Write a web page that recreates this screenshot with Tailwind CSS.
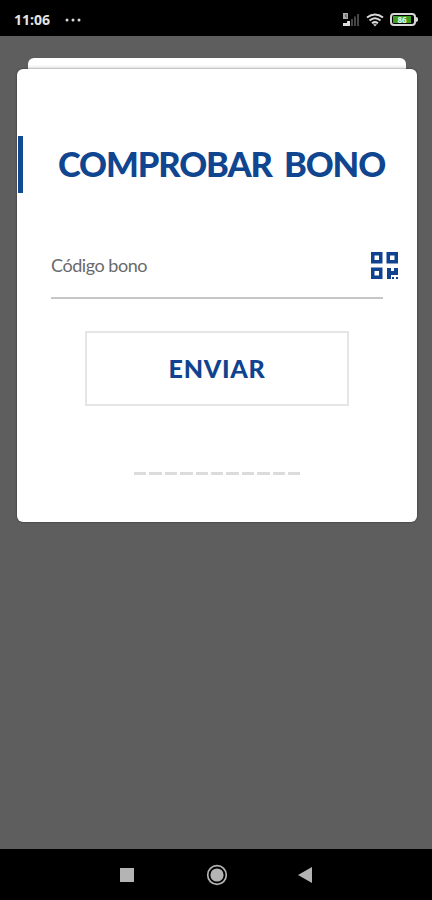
<!DOCTYPE html>
<html lang="es">
<head>
  <meta charset="UTF-8" />
  <meta name="viewport" content="width=device-width, initial-scale=1.0" />
  <title>Comprobar bono</title>
  <script src="https://cdn.jsdelivr.net/npm/@tailwindcss/browser@4"></script>
</head>
<body class="w-[432px] h-[900px] overflow-hidden flex flex-col bg-[#5e5e5e] font-['Lato',sans-serif]">

  <!-- Barra de estado -->
  <header class="h-9 shrink-0 bg-black flex items-center justify-between pl-[14px] pr-[14px] pt-[3px]">
    <div class="flex items-center gap-[15px]">
      <span class="font-['Open_Sans',sans-serif] font-bold text-[14px] leading-none text-[#e4e4e4]">11:06</span>
      <svg class="w-4 h-1" viewBox="0 0 16 4" fill="#d8d8d8">
        <circle cx="2" cy="2" r="1.5" /><circle cx="8" cy="2" r="1.5" /><circle cx="14" cy="2" r="1.5" />
      </svg>
    </div>
    <div class="flex items-center gap-[6px]">
      <svg class="w-[18px] h-[14px]" viewBox="0 0 18 14">
        <path d="M1 0h5v6H1z" fill="#aaa" />
        <path d="M3 2l2 3M4 1v3" stroke="#555" stroke-width=".8" />
        <path d="M1 10h4v3H1zM5 8h3v5H5z" fill="#ddd" />
        <path d="M9 6h2v7H9zM12 3.500h2V13h-2zM15 1h2v12h-2z" fill="#454545" />
      </svg>
      <svg class="w-[18px] h-[14px]" viewBox="0 0 18 14" fill="none" stroke="#dadada" stroke-width="2">
        <path d="M1 4.500Q9-1.500 17 4.500M3.500 7.500Q9 3 14.500 7.500M6 10.300Q9 8 12 10.300" />
        <path d="M7 11.300h4L9 13.500z" fill="#dadada" stroke="none" />
      </svg>
      <div class="flex items-center">
        <div class="w-[26px] h-[13px] rounded-[4px] border-2 border-[#d8d8d8] p-px flex">
          <span class="w-[18px] bg-[#3f9d20] font-['Open_Sans',sans-serif] font-bold text-[8px] leading-[7px] text-[#effbe8] text-center">86</span>
        </div>
        <div class="w-[2px] h-[5px] rounded-r bg-[#d8d8d8]"></div>
      </div>
    </div>
  </header>

  <main class="grow flex flex-col items-center pt-[22px]">
    <!-- Borde de la tarjeta trasera -->
    <div class="w-[378px] h-[11px] ml-[2px] rounded-t-[6px] bg-gradient-to-b from-white from-60% to-[#e8e8e8]"></div>

    <section class="w-[400px] h-[453px] ml-[2px] rounded-[6px] bg-white shadow-[0_0_2px_rgba(0,0,0,0.6)]">
      <div class="pt-[67px] flex items-center">
        <div class="w-[5px] h-[57px] ml-px bg-[#124b94]"></div>
        <h1 class="ml-[35px] font-black text-[34.500px] leading-[55px] pb-[2px] tracking-[-1.100px] [word-spacing:5px] whitespace-nowrap text-[#10458f]">COMPROBAR BONO</h1>
      </div>

      <div class="relative mt-[47px] ml-[34px] w-[332px] h-[59px] border-b-2 border-[#c6c6c6]">
        <label class="block pt-[13px] text-[18px] leading-[24px] tracking-[-0.45px] text-[#6a6a6a]">Código bono</label>
        <svg class="absolute left-[320px] top-[12px] w-[27px] h-[27px]" viewBox="0 0 27 27" fill="none" stroke="#10438f" stroke-width="3.500">
          <path d="M1.750 1.750h8v8h-8zM17.250 1.750h8v8h-8zM1.750 17.250h8v8h-8z" />
          <path d="M16 16h4v3h3v-3h4v7h-7v4h-4zM21 25h2v2h-2zM25 25h2v2h-2z" fill="#10438f" stroke="none" />
        </svg>
      </div>

      <button class="block mt-[32px] ml-[68px] w-[264px] h-[75px] border-2 border-[#e5e5e5] font-black text-[25px] leading-[71px] tracking-[0.7px] text-[#10438f]">ENVIAR</button>

      <div class="mt-[66px] ml-[117px] flex gap-[3px]">
        <i class="w-[12.400px] h-[3px] bg-[#dcdcdc]"></i><i class="w-[12.400px] h-[3px] bg-[#dcdcdc]"></i>
        <i class="w-[12.400px] h-[3px] bg-[#dcdcdc]"></i><i class="w-[12.400px] h-[3px] bg-[#dcdcdc]"></i>
        <i class="w-[12.400px] h-[3px] bg-[#dcdcdc]"></i><i class="w-[12.400px] h-[3px] bg-[#dcdcdc]"></i>
        <i class="w-[12.400px] h-[3px] bg-[#dcdcdc]"></i><i class="w-[12.400px] h-[3px] bg-[#dcdcdc]"></i>
        <i class="w-[12.400px] h-[3px] bg-[#dcdcdc]"></i><i class="w-[12.400px] h-[3px] bg-[#dcdcdc]"></i>
        <i class="w-[12.400px] h-[3px] bg-[#dcdcdc]"></i>
      </div>
    </section>
  </main>

  <!-- Barra de navegación -->
  <nav class="h-[51px] shrink-0 bg-black flex items-center pl-[120px]">
    <div class="w-[14px] h-[14px] bg-[#b4b4b4]"></div>
    <svg class="ml-[72px] w-[22px] h-[22px]" viewBox="0 0 22 22">
      <circle cx="11" cy="11" r="9.300" fill="none" stroke="#b4b4b4" stroke-width="1.700" />
      <circle cx="11" cy="11" r="6.600" fill="#b4b4b4" />
    </svg>
    <svg class="ml-[70px] w-[14px] h-[16px]" viewBox="0 0 14 16" fill="#b4b4b4"><path d="M14 0v16L0 8z" /></svg>
  </nav>

</body>
</html>
